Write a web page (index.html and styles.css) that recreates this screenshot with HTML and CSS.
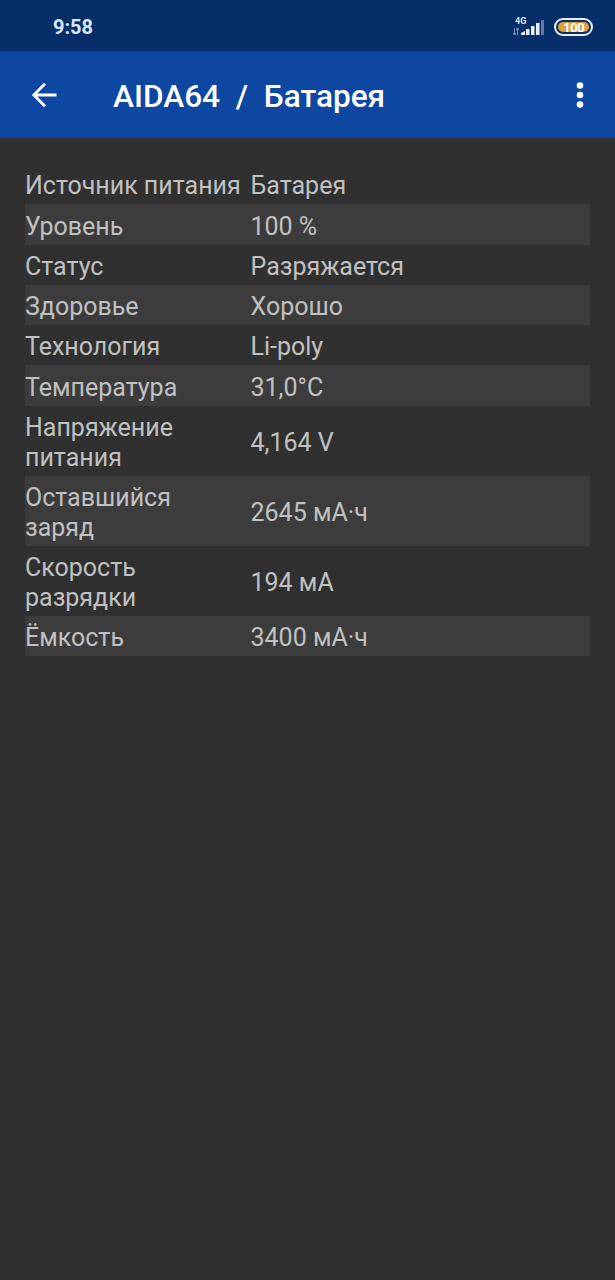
FILE: index.html
```html
<!DOCTYPE html>
<html lang="ru">
<head>
  <meta charset="UTF-8" />
  <meta name="viewport" content="width=device-width, initial-scale=1.0">
  <title>AIDA64 / Батарея</title>
  <link rel="stylesheet" href="styles.css">
</head>
<body>
  <div class="status-bar">
    <span class="time">9:58</span>
    <div class="status-icons">
      <div class="network">
        <span class="network-type">4G</span>
        <svg class="signal" width="34" height="18" viewBox="0 0 34 18">
          <g fill="none" stroke="#8297bd" stroke-width="1">
            <path d="M2.500 10v7M1 15l1.500 2L4 15M5.500 17V10M4.500 12l1-2 1.500 2" />
          </g>
          <g fill="#e8eefb">
            <path d="M9 17v-2l4-2v4z" />
            <rect x="14" y="11" width="3.500" height="6" />
            <rect x="19" y="8" width="3.500" height="9" />
            <rect x="24" y="5" width="3.500" height="12" />
            <rect x="29" y="2" width="3" height="15" opacity="0.4" />
          </g>
        </svg>
      </div>
      <div class="battery"><span class="battery-level">100</span></div>
    </div>
  </div>

  <header class="app-bar">
    <svg class="back" width="26" height="26" viewBox="0 0 26 26" fill="none" stroke="#fff" stroke-width="2.800">
      <path d="M25.500 13H3M14 1.800L2.800 13L14 24.200" />
    </svg>
    <h1 class="title">AIDA64&nbsp; /&nbsp; Батарея</h1>
    <svg class="menu" width="8" height="28" viewBox="0 0 8 28" fill="#fff">
      <circle cx="4" cy="4.500" r="3.300" />
      <circle cx="4" cy="14" r="3.300" />
      <circle cx="4" cy="23.500" r="3.300" />
    </svg>
  </header>

  <main class="info">
    <div class="row"><span class="label">Источник питания</span><span class="value">Батарея</span></div>
    <div class="row"><span class="label">Уровень</span><span class="value">100 %</span></div>
    <div class="row"><span class="label">Статус</span><span class="value">Разряжается</span></div>
    <div class="row"><span class="label">Здоровье</span><span class="value">Хорошо</span></div>
    <div class="row"><span class="label">Технология</span><span class="value">Li-poly</span></div>
    <div class="row"><span class="label">Температура</span><span class="value">31,0°C</span></div>
    <div class="row"><span class="label">Напряжение питания</span><span class="value">4,164 V</span></div>
    <div class="row"><span class="label">Оставшийся заряд</span><span class="value">2645 мА·ч</span></div>
    <div class="row"><span class="label">Скорость разрядки</span><span class="value">194 мА</span></div>
    <div class="row"><span class="label">Ёмкость</span><span class="value">3400 мА·ч</span></div>
  </main>
</body>
</html>
```

FILE: styles.css
```css
* {
  box-sizing: border-box;
}

body {
  margin: 0;
  min-height: 100vh;
  font-family: Roboto, sans-serif;
  background: #303030;
  color: #c1c1c1;
}

.status-bar {
  display: flex;
  align-items: center;
  justify-content: space-between;
  height: 51px;
  padding: 3px 22px 0 53px;
  background: #082e69;
  color: #dce8fb;
}

.time {
  font-size: 20px;
  font-weight: 700;
}

.status-icons {
  display: flex;
  align-items: center;
  gap: 8px;
}

.network {
  position: relative;
  height: 18px;
}

.network-type {
  position: absolute;
  left: 3px;
  top: -1px;
  font-size: 9px;
  font-weight: 700;
  line-height: 9px;
}

.signal {
  display: block;
}

.battery {
  width: 39px;
  height: 18px;
  padding: 2px;
  border: 2px solid #e8eefb;
  border-radius: 9px;
}

.battery-level {
  display: block;
  height: 10px;
  border-radius: 5px;
  background: #dfa03c;
  color: #fff;
  font-size: 13.5px;
  font-weight: 700;
  letter-spacing: -0.7px;
  line-height: 11px;
  text-align: center;
}

.app-bar {
  display: flex;
  align-items: center;
  height: 87px;
  padding: 0 31px;
  background: #0d47a1;
  color: #fff;
}

.back {
  margin-left: -0.5px;
}

.title {
  flex: 1;
  margin: 4px 0 0 56.5px;
  font-size: 31.6px;
  font-weight: 500;
  line-height: 36px;
}

.info {
  padding: 26px 25px;
}

.row {
  display: grid;
  grid-template-columns: 225.5px 1fr;
  align-items: center;
  padding: 7.25px 0 3.25px;
  font-size: 25px;
  line-height: 29.8px;
}

.row:nth-child(even) {
  background: #3c3c3c;
}

.label {
  padding-right: 5px;
}
```
